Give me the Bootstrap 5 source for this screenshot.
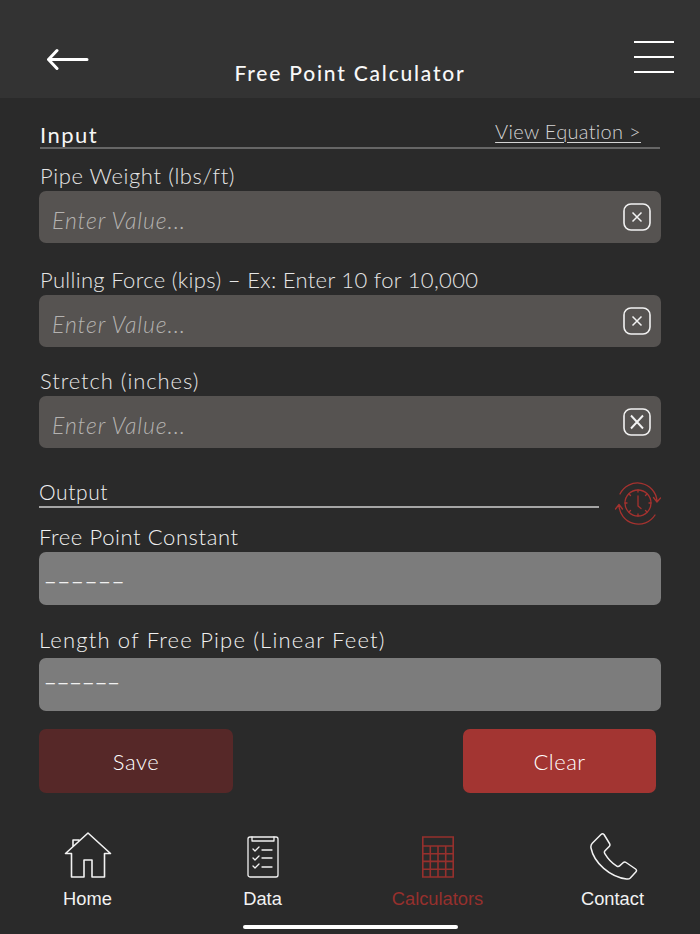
<!DOCTYPE html>
<html lang="en">
<head>
  <meta charset="UTF-8" />
  <meta name="viewport" content="width=device-width, initial-scale=1" />
  <title>Free Point Calculator</title>
  <link href="https://cdn.jsdelivr.net/npm/bootstrap@5.3.0/dist/css/bootstrap.min.css" rel="stylesheet" />
  <style>
    html, body { height: 100%; }
    body {
      width: 700px; height: 934px; overflow: hidden;
      background: #2a2a2a; color: #e8e8e8;
      font-family: "Lato", "Open Sans", sans-serif; font-weight: 300;
    }
    .top-bar { height: 98px; background: #333; padding: 41px 26px 0 47px; }
    .top-bar h1 {
      position: absolute; left: 0; right: 0; top: 61px; margin: 0; text-align: center;
      font-family: "Lato", sans-serif; font-size: 21px; line-height: 24px; font-weight: 500; letter-spacing: 1.8px; color: #f8f8f8;
    }
    .back-arrow { margin-top: 5px; }
    .sheet { padding: 23px 39px 0; }
    .sec-head { height: 28px; margin-left: 1px; margin-right: 1px; border-bottom: 2px solid #666; }
    .sec-head span { font-size: 22px; line-height: 27px; font-weight: 400; letter-spacing: 1.5px; color: #f6f6f6; }
    .sec-head a { font-size: 20px; line-height: 20px; color: #d4d4d4; letter-spacing: .3px; margin-right: 19px; text-decoration-thickness: 1px; text-underline-offset: 3px; }
    .input-list { margin-top: 13px; }
    .field-label { display: block; margin: 0 0 1px 1px; font-size: 22px; line-height: 28px; letter-spacing: .6px; color: #e6e6e6; }
    .wide-label { letter-spacing: .33px; }
    .stretch-label { letter-spacing: .93px; }
    .field-wrap { position: relative; margin-bottom: 23px; }
    .field-wrap.tight { margin-bottom: 20px; }
    .field-wrap.last-input { margin-bottom: 24px; }
    .field-wrap.first-out { margin-bottom: 21px; }
    .field-wrap.last-out { margin-bottom: 18px; }
    .form-control.entry {
      height: 52px; background: #565351; border: 0; border-radius: 7px; padding: 5px 60px 0 13px;
      font-size: 23px; font-weight: 300; font-style: italic; letter-spacing: .9px; color: #eee; box-shadow: none;
    }
    .form-control.entry::placeholder { color: #b4b2b0; opacity: 1; }
    .clear-x { position: absolute; right: 10px; top: 12px; padding: 0; border: 0; background: none; line-height: 0; }
    .out-row { height: 36px; }
    .out-row svg { margin-top: 10px; flex: none; }
    .out-head { height: 36px; padding-top: 8px; border-bottom: 2px solid #a5a5a5; }
    .out-head span { display: block; font-size: 21px; line-height: 24px; letter-spacing: .6px; color: #f2f2f2; }
    .out-label { margin: 15px 0 1px; color: #f2f2f2; }
    .out-label.next { margin: 0 0 4px; letter-spacing: 1.2px; }
    .form-control.result {
      height: 53px; background: #7c7c7c; border: 0; border-radius: 7px; padding: 0 6px 16px;
      font-size: 23px; font-weight: 400; color: #f0f0f0; letter-spacing: 3px; box-shadow: none;
    }
    .form-control.result.short { padding-bottom: 26px; letter-spacing: 2.1px; }
    .act-row { padding-right: 5px; }
    .btn.act { width: 194px; height: 64px; border: 0; border-radius: 7px; font-size: 22px; font-weight: 300; letter-spacing: .5px; color: #fff; }
    .act-dark { background: #562828; }
    .btn.act-red { background: #a33532; width: 193px; }
    .tab-strip { position: absolute; left: 0; right: 0; top: 830px; }
    .tab-item { width: 175px; text-align: center; text-decoration: none; color: #f2f2f2; font-family: "Liberation Sans", sans-serif; font-weight: 400; font-size: 18.3px; line-height: 22px; }
    .tab-item svg { display: block; margin: 0 auto 8px; height: 50px; }
    .tab-on { color: #96302d; }
    .home-bar { position: absolute; left: 243px; top: 925px; width: 215px; height: 4px; border-radius: 2px; background: #fff; }
  </style>
</head>
<body>

<header class="top-bar d-flex justify-content-between align-items-start">
  <svg class="back-arrow" width="42" height="26" viewBox="0 0 42 26" fill="none" stroke="#fff" stroke-width="3" stroke-linecap="round" stroke-linejoin="round"><path d="M40 13.500H2M10 4.500 1.500 13.500l8.500 9"/></svg>
  <h1>Free Point Calculator</h1>
  <svg width="40" height="32" viewBox="0 0 40 32" stroke="#fff" stroke-width="2"><path d="M0 1h40M0 16h40M0 31h40"/></svg>
</header>

<main class="sheet">
  <div class="sec-head d-flex justify-content-between align-items-start">
    <span>Input</span>
    <a href="#">View Equation &gt;</a>
  </div>

  <div class="input-list">
    <label class="field-label">Pipe Weight (lbs/ft)</label>
    <div class="field-wrap">
      <input class="form-control entry" placeholder="Enter Value..." />
      <button class="clear-x" type="button"><svg width="28" height="28" viewBox="0 0 28 28" fill="none" stroke="#f2f2f2"><rect x="1" y="1" width="26" height="26" rx="7" stroke-width="1.600"/><path d="M9.500 9.500l9 9M18.500 9.500l-9 9" stroke-width="1.500"/></svg></button>
    </div>
    <label class="field-label wide-label">Pulling Force (kips) – Ex: Enter 10 for 10,000</label>
    <div class="field-wrap tight">
      <input class="form-control entry" placeholder="Enter Value..." />
      <button class="clear-x" type="button"><svg width="28" height="28" viewBox="0 0 28 28" fill="none" stroke="#f2f2f2"><rect x="1" y="1" width="26" height="26" rx="7" stroke-width="1.600"/><path d="M9.500 9.500l9 9M18.500 9.500l-9 9" stroke-width="1.500"/></svg></button>
    </div>
    <label class="field-label stretch-label">Stretch (inches)</label>
    <div class="field-wrap last-input">
      <input class="form-control entry" placeholder="Enter Value..." />
      <button class="clear-x" type="button"><svg width="28" height="28" viewBox="0 0 28 28" fill="none" stroke="#f2f2f2"><rect x="1" y="1" width="26" height="26" rx="7" stroke-width="1.600"/><path d="M8 7.500l12 13M20 7.500l-12 13" stroke-width="1.900"/></svg></button>
    </div>
  </div>

  <div class="out-row d-flex align-items-start">
    <div class="out-head flex-grow-1"><span>Output</span></div>
    <svg class="ms-3" width="46" height="44" viewBox="1 0 46 44" fill="none" stroke="#a5322f" stroke-width="1.300" stroke-linecap="round" stroke-linejoin="round">
      <circle cx="24" cy="21" r="13"/>
      <path d="M24 14v10l3 2.500M24 8v2M24 32v2M11 21h2M35 21h2M15 12l1.500 1.500M33 12l-1.500 1.500M15 30l1.500-1.500M33 30l-1.500-1.500"/>
      <path d="M6 12A19.500 19.500 0 0 1 43 19M39.500 15.500 43 20l3.500-4"/>
      <path d="M41 33A19.500 19.500 0 0 1 5 23M1.500 27 5 22.500 8.500 27"/>
    </svg>
  </div>

  <div>
    <label class="field-label out-label">Free Point Constant</label>
    <div class="field-wrap first-out"><input class="form-control result" value="______" readonly /></div>
    <label class="field-label out-label next">Length of Free Pipe (Linear Feet)</label>
    <div class="field-wrap last-out"><input class="form-control result short" value="______" readonly /></div>
  </div>

  <div class="act-row d-flex justify-content-between">
    <button class="btn act act-dark" type="button">Save</button>
    <button class="btn act act-red" type="button">Clear</button>
  </div>
</main>

<nav class="tab-strip d-flex justify-content-center">
  <a class="tab-item" href="#">
    <svg width="48" height="50" viewBox="0 0 48 50" fill="none" stroke="#f2f2f2" stroke-width="1.600" stroke-linejoin="round"><path d="M1.500 23.500 24 3l22.500 20.500H40.500V47H28V30h-8v17H7.500V23.500zM9 17V10h6v1"/></svg>
    Home
  </a>
  <a class="tab-item" href="#">
    <svg width="34" height="50" viewBox="0 0 34 50" fill="none" stroke="#f2f2f2" stroke-width="1.300" stroke-linecap="round" stroke-linejoin="round"><rect x="2" y="7" width="30" height="40" rx="2"/><path d="M6 7v4h22V7M7 19l2 2 4-4M7 28l2 2 4-4M7 36l2 2 4-4M16 20h10M16 28h10M16 37h10"/></svg>
    Data
  </a>
  <a class="tab-item tab-on" href="#">
    <svg width="32" height="50" viewBox="0 0 32 50" fill="none" stroke="#96302d" stroke-width="1.600"><path d="M.800 7h30.400v40H.800zM.800 16h30.400M.800 23.700h30.400M.800 31.400h30.400M.800 39.200h30.400M8.300 16v31M16 16v31M23.700 16v31"/></svg>
    Calculators
  </a>
  <a class="tab-item" href="#">
    <svg width="50" height="50" viewBox="0 0 50 50" fill="none" stroke="#f2f2f2" stroke-width="1.500" stroke-linejoin="round"><path d="M13 4.500c1-1 2-1 3 0l5.500 9c.7 1.200.5 2.200-.3 3l-4.200 4.300c-.8.900-.8 1.800-.2 2.800 3 5 7 9.500 12 12.500 1 .6 2 .5 2.800-.2l3.500-3.200c1-.8 2-.9 3-.2l9.500 6.500c1.200.8 1.200 2 .2 3l-5.500 6c-1 1-2.200 1.300-3.700 1C22 47 6 33 3 18c-.4-2 0-3.500 1.500-5z"/></svg>
    Contact
  </a>
</nav>
<div class="home-bar"></div>

</body>
</html>
